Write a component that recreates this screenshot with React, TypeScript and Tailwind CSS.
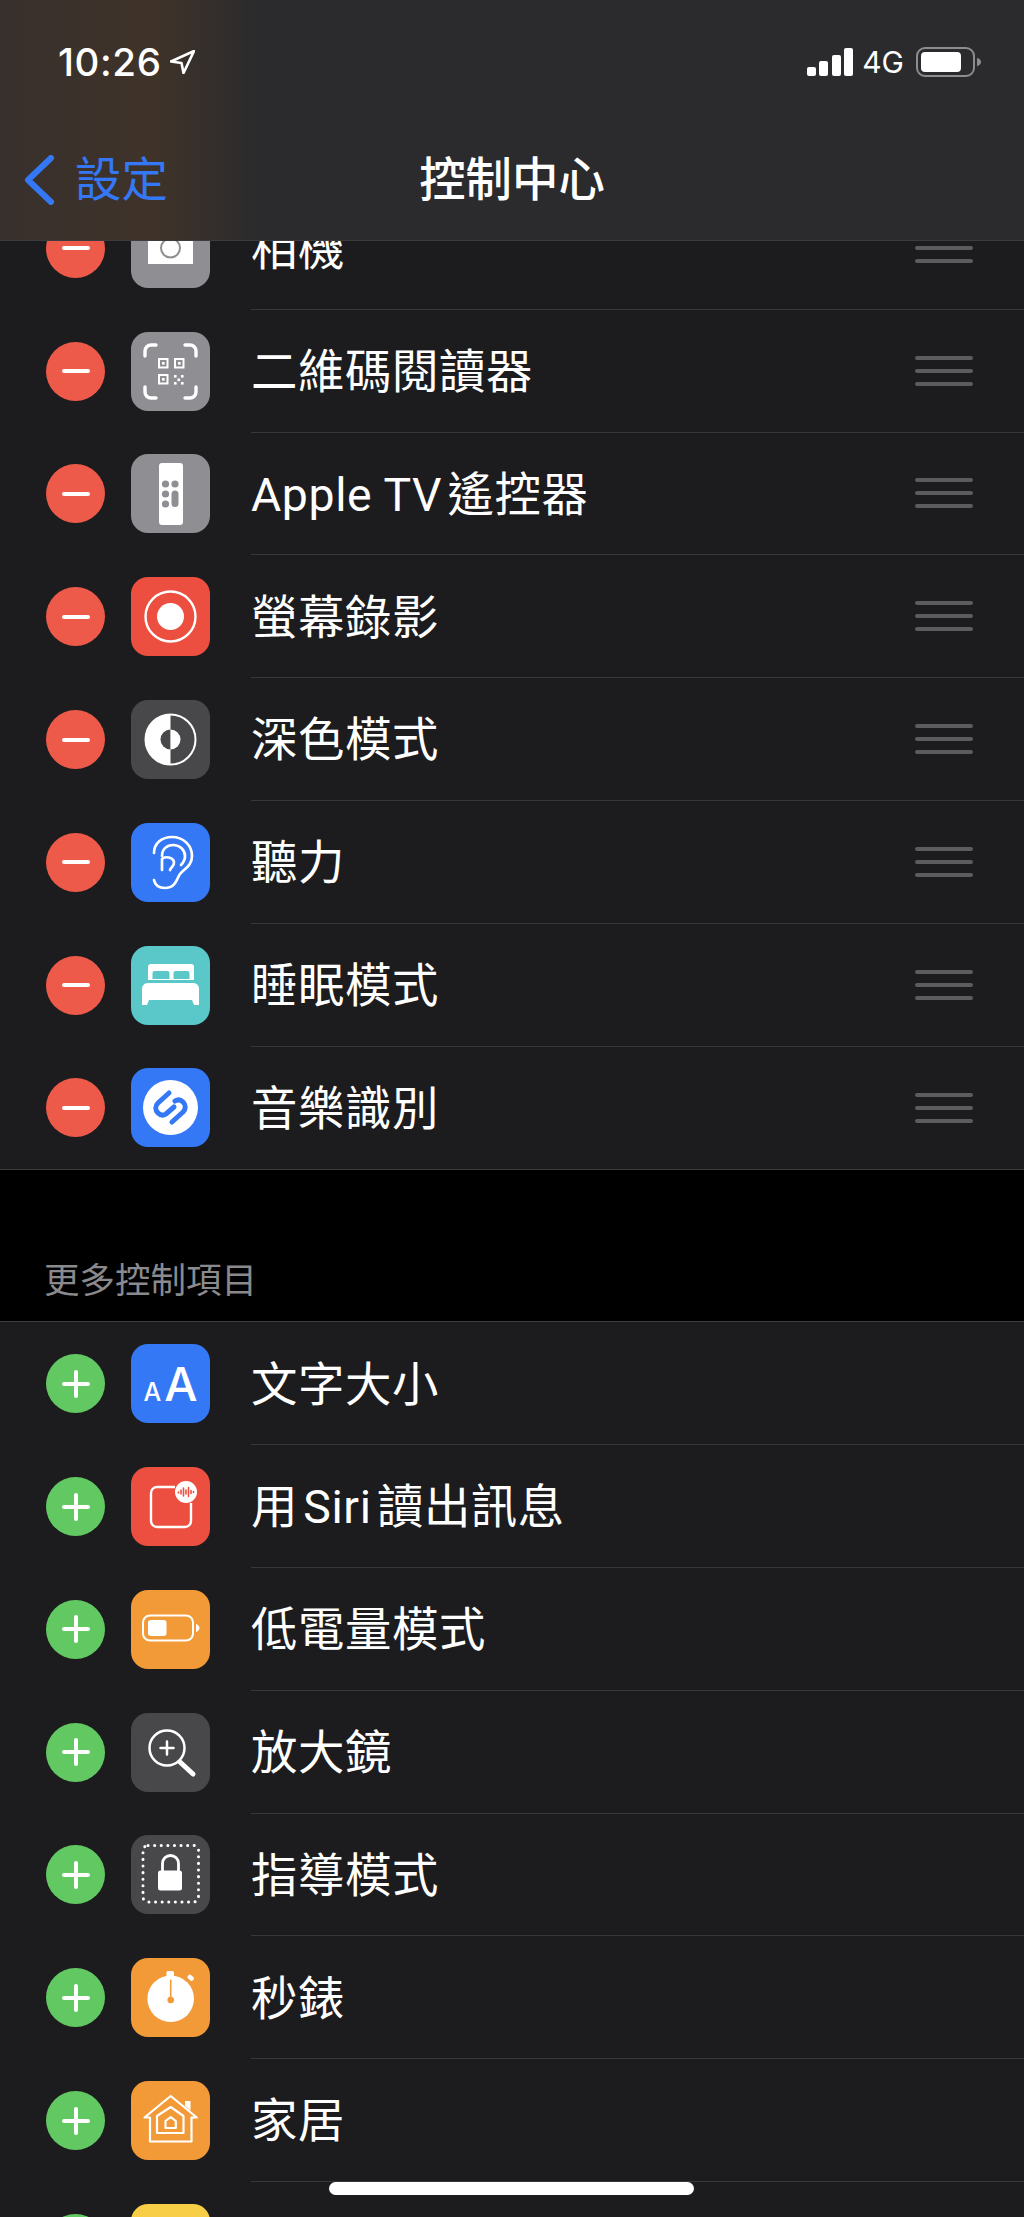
import type { ReactNode } from 'react';

const FONT = "font-['Roboto','Noto_Sans_CJK_TC',sans-serif]";

// Icon drawings share a 79x79 box, same as the tile
function Glyph({ children }: { children: ReactNode }) {
  return (
    <svg viewBox="0 0 79 79" className="h-[79px] w-[79px]" fill="none">
      {children}
    </svg>
  );
}

function CameraGlyph() {
  return (
    <Glyph>
      <path d="M17 24h11l3-5h17l3 5h11v31H17z" fill="white" />
      <path d="M52 19h7v4h-7z" fill="white" />
      <circle cx="39.5" cy="39" r="9.5" fill="white" stroke="#8e8e93" strokeWidth="2" />
    </Glyph>
  );
}

function QrGlyph() {
  return (
    <Glyph>
      <g stroke="white" strokeWidth="3.4" strokeLinecap="round">
        <path d="M14 24v-5a6 6 0 0 1 6-6h5M54 13h5a6 6 0 0 1 6 6v5M65 55v5a6 6 0 0 1-6 6h-5M25 66h-5a6 6 0 0 1-6-6v-5" />
      </g>
      <g stroke="white" strokeWidth="2">
        <rect x="28" y="27" width="8.5" height="8.5" />
        <rect x="44" y="27" width="8.5" height="8.5" />
        <rect x="28" y="43" width="8.5" height="8.5" />
      </g>
      <g fill="white">
        <rect x="31" y="30" width="2.6" height="2.6" />
        <rect x="47" y="30" width="2.6" height="2.6" />
        <rect x="31" y="46" width="2.6" height="2.6" />
        <rect x="43" y="43" width="2.6" height="2.6" />
        <rect x="50" y="43" width="2.6" height="2.6" />
        <rect x="46.5" y="46.5" width="2.6" height="2.6" />
        <rect x="43" y="50" width="2.6" height="2.6" />
        <rect x="50" y="50" width="2.6" height="2.6" />
      </g>
    </Glyph>
  );
}

function RemoteGlyph() {
  return (
    <Glyph>
      <rect x="28" y="9" width="24" height="62" rx="3" fill="white" />
      <g fill="#8e8e93">
        <circle cx="34.5" cy="30" r="3.6" />
        <circle cx="44" cy="30" r="3.6" />
        <circle cx="34.5" cy="40" r="3.6" />
        <circle cx="34.5" cy="50" r="3.6" />
        <rect x="40.5" y="36.5" width="7" height="16.5" rx="3.5" />
      </g>
    </Glyph>
  );
}

function RecordGlyph() {
  return (
    <Glyph>
      <circle cx="39.5" cy="39.5" r="25" stroke="white" strokeWidth="2.4" />
      <circle cx="39.5" cy="39.5" r="13.5" fill="white" />
    </Glyph>
  );
}

function DarkModeGlyph() {
  return (
    <Glyph>
      <circle cx="39.5" cy="39.5" r="25" stroke="white" strokeWidth="2" />
      <path d="M39.5 14.5a25 25 0 0 0 0 50z" fill="white" />
      <path d="M39.5 29.5a10 10 0 0 0 0 20z" fill="#48484a" />
      <path d="M39.5 29.5a10 10 0 0 1 0 20z" fill="white" />
    </Glyph>
  );
}

function EarGlyph() {
  return (
    <Glyph>
      <g stroke="white" strokeWidth="2.7" strokeLinecap="round">
        <path d="M23 30C23 20 31 14 41 14c11 0 20 8 20 19 0 10-8 13-12 18-3 4-4 14-15 14-6 0-10-3-11-8" />
        <path d="M31 33c0-7 5-11 11-11 7 0 12 5 12 11 0 4-2 7-4 9" />
        <path d="M31 47V36c3-3 11-2 12 3 .5 4-3 5-4 8" />
      </g>
    </Glyph>
  );
}

function BedGlyph() {
  return (
    <Glyph>
      <path d="M20 18h40a3 3 0 0 1 3 3v13H17V21a3 3 0 0 1 3-3z" fill="white" />
      <path d="M21.500 33v-6a2 2 0 0 1 2-2h13a2 2 0 0 1 2 2v6zM42.500 33v-6a2 2 0 0 1 2-2h12a2 2 0 0 1 2 2v6z" fill="#5ac8c8" />
      <path d="M17 37h45c4 0 6 3 6 6v16h-5l-2-5H18l-2 5h-5V43c0-3 2-6 6-6z" fill="white" />
    </Glyph>
  );
}

function ShazamGlyph() {
  return (
    <Glyph>
      <circle cx="39.5" cy="39.5" r="27.500" fill="white" />
      <g stroke="#3478f6" strokeWidth="5" strokeLinecap="round">
        <path d="M38 25L27 35c-3 3-3 7 0 10 2 2 5 3 8 1l8-7" />
        <path d="M41 54l11-10c3-3 3-7 0-10-2-2-5-3-8-1" />
      </g>
    </Glyph>
  );
}

function SiriGlyph() {
  return (
    <Glyph>
      <path d="M44 20H26a6 6 0 0 0-6 6v28a6 6 0 0 0 6 6h28a6 6 0 0 0 6-6V36" stroke="white" strokeWidth="2.4" />
      <circle cx="55" cy="25" r="11" fill="white" />
      <g stroke="#ec4f3f" strokeWidth="1.600" strokeLinecap="round">
        <path d="M47.500 25v1M50 23v4M52.500 21v8M55 23v4M57.500 20.500v9M60 23.500v3M62.500 24.500v1" />
      </g>
    </Glyph>
  );
}

function BatteryGlyph() {
  return (
    <Glyph>
      <rect x="12" y="25.500" width="50" height="25" rx="7" stroke="white" strokeWidth="2" />
      <rect x="17" y="30" width="18.500" height="16" rx="3" fill="white" />
      <path d="M65 34c2.500 1 3.500 2.500 3.500 4s-1 3-3.500 4z" fill="white" />
    </Glyph>
  );
}

function MagnifierGlyph() {
  return (
    <Glyph>
      <circle cx="36" cy="35" r="17.500" stroke="white" strokeWidth="2.500" />
      <path d="M29.500 35h13M36 28.500v13" stroke="white" strokeWidth="2.500" strokeLinecap="round" />
      <path d="M49 49l13 12" stroke="white" strokeWidth="5" strokeLinecap="round" />
    </Glyph>
  );
}

function GuidedGlyph() {
  return (
    <Glyph>
      <rect x="12" y="10.500" width="55.500" height="56.500" rx="5" stroke="white" strokeWidth="3" strokeLinecap="round" strokeDasharray="0.1 6.500" />
      <path d="M31.500 36v-7.500a8 8 0 0 1 16 0V36" stroke="white" strokeWidth="2.800" />
      <rect x="27" y="35.500" width="24" height="20" rx="2.500" fill="white" />
    </Glyph>
  );
}

function StopwatchGlyph() {
  return (
    <Glyph>
      <rect x="35.500" y="13" width="7.500" height="8" rx="1.500" fill="white" />
      <rect x="56.500" y="17.500" width="6.500" height="4.500" rx="1.500" fill="white" transform="rotate(42 59.700 19.700)" />
      <circle cx="39.700" cy="40.700" r="23.300" fill="white" />
      <path d="M39.700 21.700v22" stroke="#f29a38" strokeWidth="1.600" />
      <circle cx="39.700" cy="42" r="3.300" fill="#f29a38" />
    </Glyph>
  );
}

function HomeGlyph() {
  return (
    <Glyph>
      <g stroke="white" strokeWidth="2.200" strokeLinejoin="round" strokeLinecap="round">
        <path d="M13.500 36.500L39.700 15 65.800 36.500H60.500V60.500H19V36.500z" />
        <path d="M26 35L39.700 26 52.500 35V52H26z" />
        <path d="M34.500 40L39.700 36 44.800 40V47H34.500z" />
      </g>
      <path d="M54 20h5.500v9.500L54 25z" fill="white" />
    </Glyph>
  );
}

function TextSizeGlyph() {
  return (
    <div className="flex items-baseline font-['Inter',sans-serif] font-medium leading-none text-white">
      <span className="text-[25px]">A</span>
      <span className="ml-[3px] text-[47px]">A</span>
    </div>
  );
}

type Item = { label: string; tile: string; glyph?: ReactNode };

const included: Item[] = [
  { label: '相機', tile: 'bg-[#8e8e93]', glyph: <CameraGlyph /> },
  { label: '二維碼閱讀器', tile: 'bg-[#8e8e93]', glyph: <QrGlyph /> },
  { label: 'Apple TV\u200A遙控器', tile: 'bg-[#8e8e93]', glyph: <RemoteGlyph /> },
  { label: '螢幕錄影', tile: 'bg-[#ec4f3f]', glyph: <RecordGlyph /> },
  { label: '深色模式', tile: 'bg-[#48484a]', glyph: <DarkModeGlyph /> },
  { label: '聽力', tile: 'bg-[#3478f6]', glyph: <EarGlyph /> },
  { label: '睡眠模式', tile: 'bg-[#5ac8c8]', glyph: <BedGlyph /> },
  { label: '音樂識別', tile: 'bg-[#3478f6]', glyph: <ShazamGlyph /> },
];

const more: Item[] = [
  { label: '文字大小', tile: 'bg-[#3478f6]', glyph: <TextSizeGlyph /> },
  { label: '用\u200ASiri\u200A讀出訊息', tile: 'bg-[#ec4f3f]', glyph: <SiriGlyph /> },
  { label: '低電量模式', tile: 'bg-[#f29a38]', glyph: <BatteryGlyph /> },
  { label: '放大鏡', tile: 'bg-[#48484a]', glyph: <MagnifierGlyph /> },
  { label: '指導模式', tile: 'bg-[#48484a]', glyph: <GuidedGlyph /> },
  { label: '秒錶', tile: 'bg-[#f29a38]', glyph: <StopwatchGlyph /> },
  { label: '家居', tile: 'bg-[#f29a38]', glyph: <HomeGlyph /> },
  { label: '', tile: 'bg-[#f7ce46]' },
];

function Row({ item, add, last }: { item: Item; add?: boolean; last?: boolean }) {
  return (
    <div className="flex h-[122.8px] items-center pl-[46px]">
      {add ? (
        <div className="relative h-[59px] w-[59px] shrink-0 rounded-full bg-[#62c962]">
          <div className="absolute left-[15.500px] top-[27.500px] h-[4px] w-[28px] rounded-full bg-white" />
          <div className="absolute left-[27.500px] top-[15.500px] h-[28px] w-[4px] rounded-full bg-white" />
        </div>
      ) : (
        <div className="flex h-[59px] w-[59px] shrink-0 items-center justify-center rounded-full bg-[#ee5a49]">
          <div className="h-[4px] w-[28px] rounded-full bg-white" />
        </div>
      )}
      <div className={`ml-[26px] flex h-[79px] w-[79px] shrink-0 items-center justify-center rounded-[17px] ${item.tile}`}>
        {item.glyph}
      </div>
      <div className={`ml-[41px] flex h-full min-w-0 flex-1 items-center pr-[51px] ${last ? '' : 'border-b-[1.500px] border-[#38383a]'}`}>
        <span className="flex-1 pt-[3px] text-[46.400px] leading-none tracking-[0.6px] text-white">{item.label}</span>
        {!add && (
          <div className="flex w-[58px] flex-col gap-[9px]">
            <div className="h-[4px] rounded-full bg-[#5c5c5f]" />
            <div className="h-[4px] rounded-full bg-[#5c5c5f]" />
            <div className="h-[4px] rounded-full bg-[#5c5c5f]" />
          </div>
        )}
      </div>
    </div>
  );
}

function StatusBar() {
  return (
    <div className="flex h-[124px] items-center pl-[58px] pr-[42px]">
      <span className="font-['Inter',sans-serif] text-[38.500px] font-medium leading-none tracking-[0.6px] text-white">10:26</span>
      <svg viewBox="0 0 25 24" className="ml-[9px] h-[24px] w-[25px]" fill="none">
        <path d="M24 1L1 11.500l10.500 1.500L13.500 23z" stroke="white" strokeWidth="2.600" strokeLinejoin="round" />
      </svg>
      <div className="ml-auto flex items-center">
        <svg viewBox="0 0 46 28" className="h-[28px] w-[46px]" fill="white">
          <rect x="0" y="19" width="9" height="9" rx="2" />
          <rect x="12" y="13" width="9" height="15" rx="2" />
          <rect x="25" y="7" width="9" height="21" rx="2" />
          <rect x="37" y="0" width="9" height="28" rx="2" />
        </svg>
        <span className="ml-[9px] font-['Inter',sans-serif] text-[30px] font-normal leading-none text-white">4G</span>
        <svg viewBox="0 0 66 30" className="ml-[12px] h-[30px] w-[66px]" fill="none">
          <rect x="1" y="1" width="57" height="28" rx="8" stroke="#8d8d8f" strokeWidth="2" />
          <rect x="5" y="5" width="40" height="20" rx="4" fill="white" />
          <path d="M61 11c2.500.5 4 2 4 4s-1.500 3.500-4 4z" fill="#8d8d8f" />
        </svg>
      </div>
    </div>
  );
}

function NavBar() {
  return (
    <div className="relative flex h-[116px] items-center justify-center pb-[4px]">
      <div className="absolute left-[24px] top-[31px] flex items-center">
        <svg viewBox="0 0 32 50" className="h-[50px] w-[32px]" fill="none">
          <path d="M27 3L4 25l23 22" stroke="#3478f6" strokeWidth="6" strokeLinecap="round" strokeLinejoin="round" />
        </svg>
        <span className="ml-[19px] text-[46.400px] leading-none text-[#3478f6]">設定</span>
      </div>
      <span className="text-[46.400px] font-medium leading-none text-white">控制中心</span>
    </div>
  );
}

export default function App() {
  return (
    <div className={`relative h-[2217px] w-[1024px] overflow-hidden bg-black ${FONT}`}>
      <div className="relative z-10 h-[241px] border-b-[1.500px] border-[#3c3c3e] bg-[#2b2b2d] bg-linear-to-r from-[#38302d] from-0% via-[#3f3329] via-[15%] to-[#2b2b2d] to-[25%]">
        <StatusBar />
        <NavBar />
      </div>

      <div className="-mt-[54px] border-b-[1.500px] border-[#3c3c3e] bg-[#1c1c1e]">
        {included.map((item, i) => (
          <Row key={item.label} item={item} last={i === included.length - 1} />
        ))}
      </div>

      <div className="flex h-[152px] items-end border-b-[1.500px] border-[#3c3c3e] pb-[22px] pl-[44px]">
        <span className="text-[35.500px] leading-none text-[#8a8a8e]">更多控制項目</span>
      </div>

      <div className="bg-[#1c1c1e]">
        {more.map((item) => (
          <Row key={item.tile + item.label} item={item} add />
        ))}
      </div>

      <div className="absolute bottom-[22px] left-[329px] h-[13px] w-[365px] rounded-full bg-white" />
    </div>
  );
}
